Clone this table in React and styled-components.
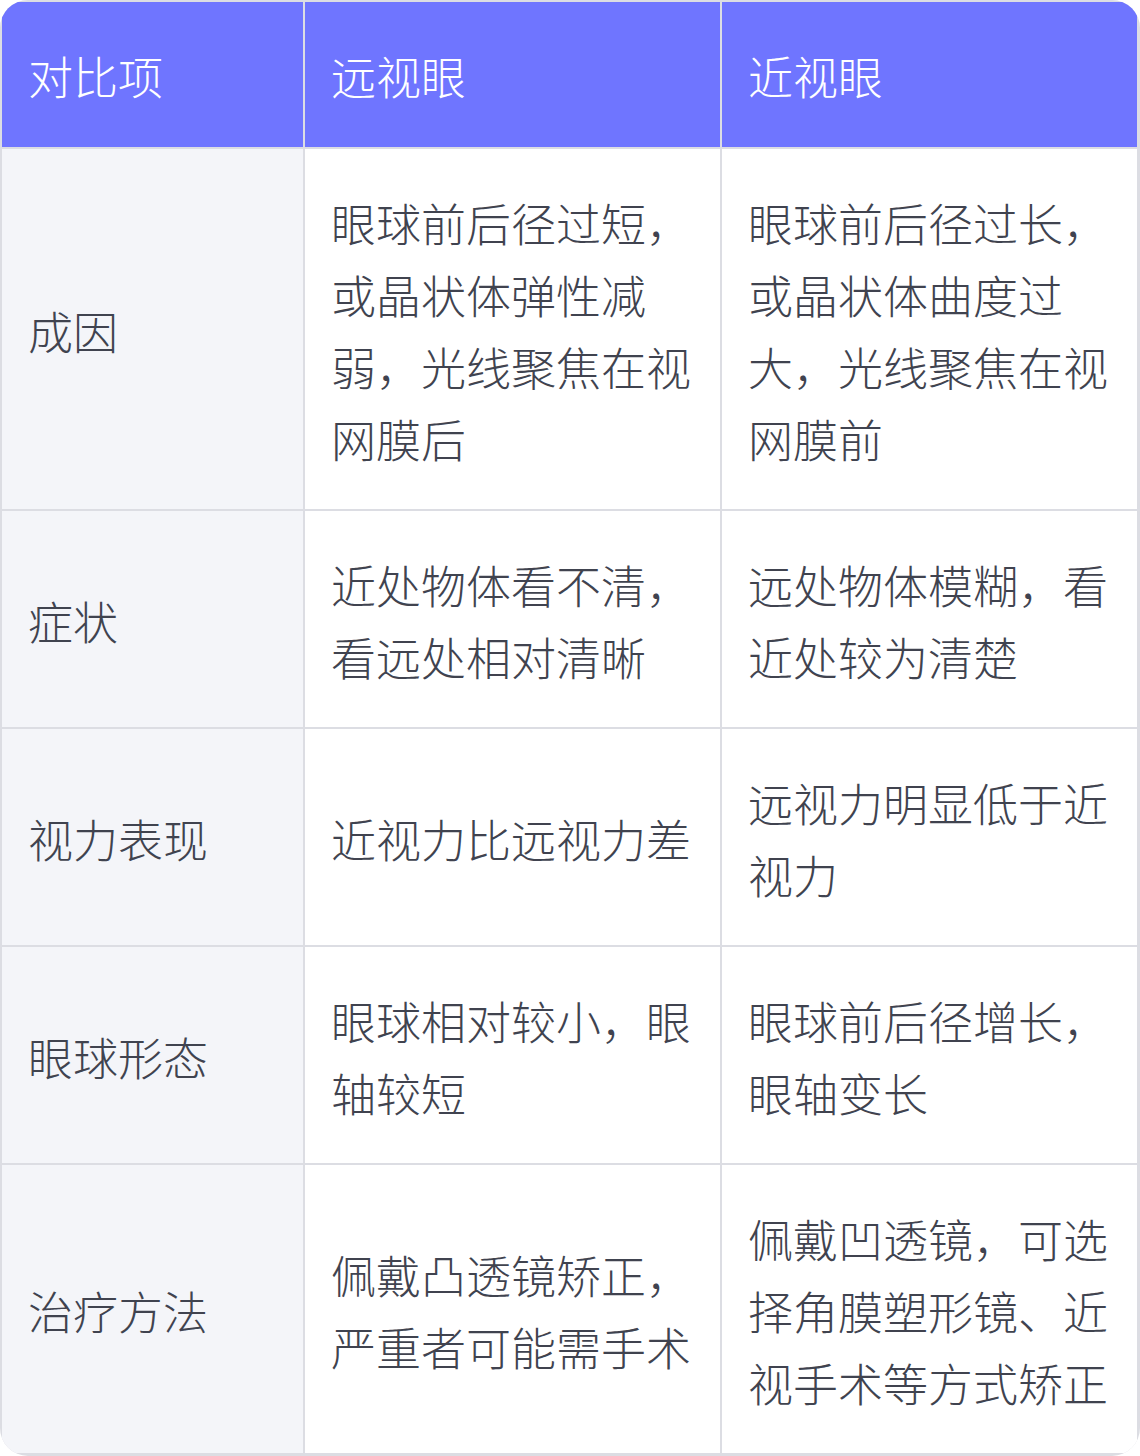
import React from "react";
import styled, { createGlobalStyle } from "styled-components";

const GlobalStyle = createGlobalStyle`
  html, body {
    margin: 0;
    padding: 0;
    background: #ffffff;
  }
  body {
    font-family: "Noto Sans CJK SC", "Noto Sans", sans-serif;
  }
`;

const Table = styled.div`
  width: 1140px;
  box-sizing: border-box;
  display: grid;
  grid-template-columns: 301px 415px 1fr;
  gap: 2px;
  padding: 2px 3px 3px 2px;
  background: #dcdde3;
  border-radius: 28px;
  overflow: hidden;
`;

const HeadCell = styled.div`
  background: #6f75ff;
  color: #ffffff;
  font-size: 45px;
  font-weight: 300;
  line-height: 72px;
  padding: 38px 28px 35px 26px;
  display: flex;
  align-items: center;
`;

const Cell = styled.div`
  background: ${(p) => (p.$label ? "#f4f5f9" : "#ffffff")};
  color: #40434f;
  font-size: 45px;
  font-weight: 300;
  line-height: 72px;
  padding: 38px 28px 34px 26px;
  display: flex;
  align-items: center;
  word-break: break-all;
`;

const headers = ["对比项", "远视眼", "近视眼"];

const rows = [
  [
    "成因",
    "眼球前后径过短，或晶状体弹性减弱，光线聚焦在视网膜后",
    "眼球前后径过长，或晶状体曲度过大，光线聚焦在视网膜前",
  ],
  ["症状", "近处物体看不清，看远处相对清晰", "远处物体模糊，看近处较为清楚"],
  ["视力表现", "近视力比远视力差", "远视力明显低于近视力"],
  ["眼球形态", "眼球相对较小，眼轴较短", "眼球前后径增长，眼轴变长"],
  [
    "治疗方法",
    "佩戴凸透镜矫正，严重者可能需手术",
    "佩戴凹透镜，可选择角膜塑形镜、近视手术等方式矫正",
  ],
];

export default function App() {
  return (
    <>
      <GlobalStyle />
      <Table>
        {headers.map((h) => (
          <HeadCell key={h}>{h}</HeadCell>
        ))}
        {rows.map((r) =>
          r.map((c, i) => (
            <Cell key={r[0] + i} $label={i === 0}>
              <span>{c}</span>
            </Cell>
          ))
        )}
      </Table>
    </>
  );
}
